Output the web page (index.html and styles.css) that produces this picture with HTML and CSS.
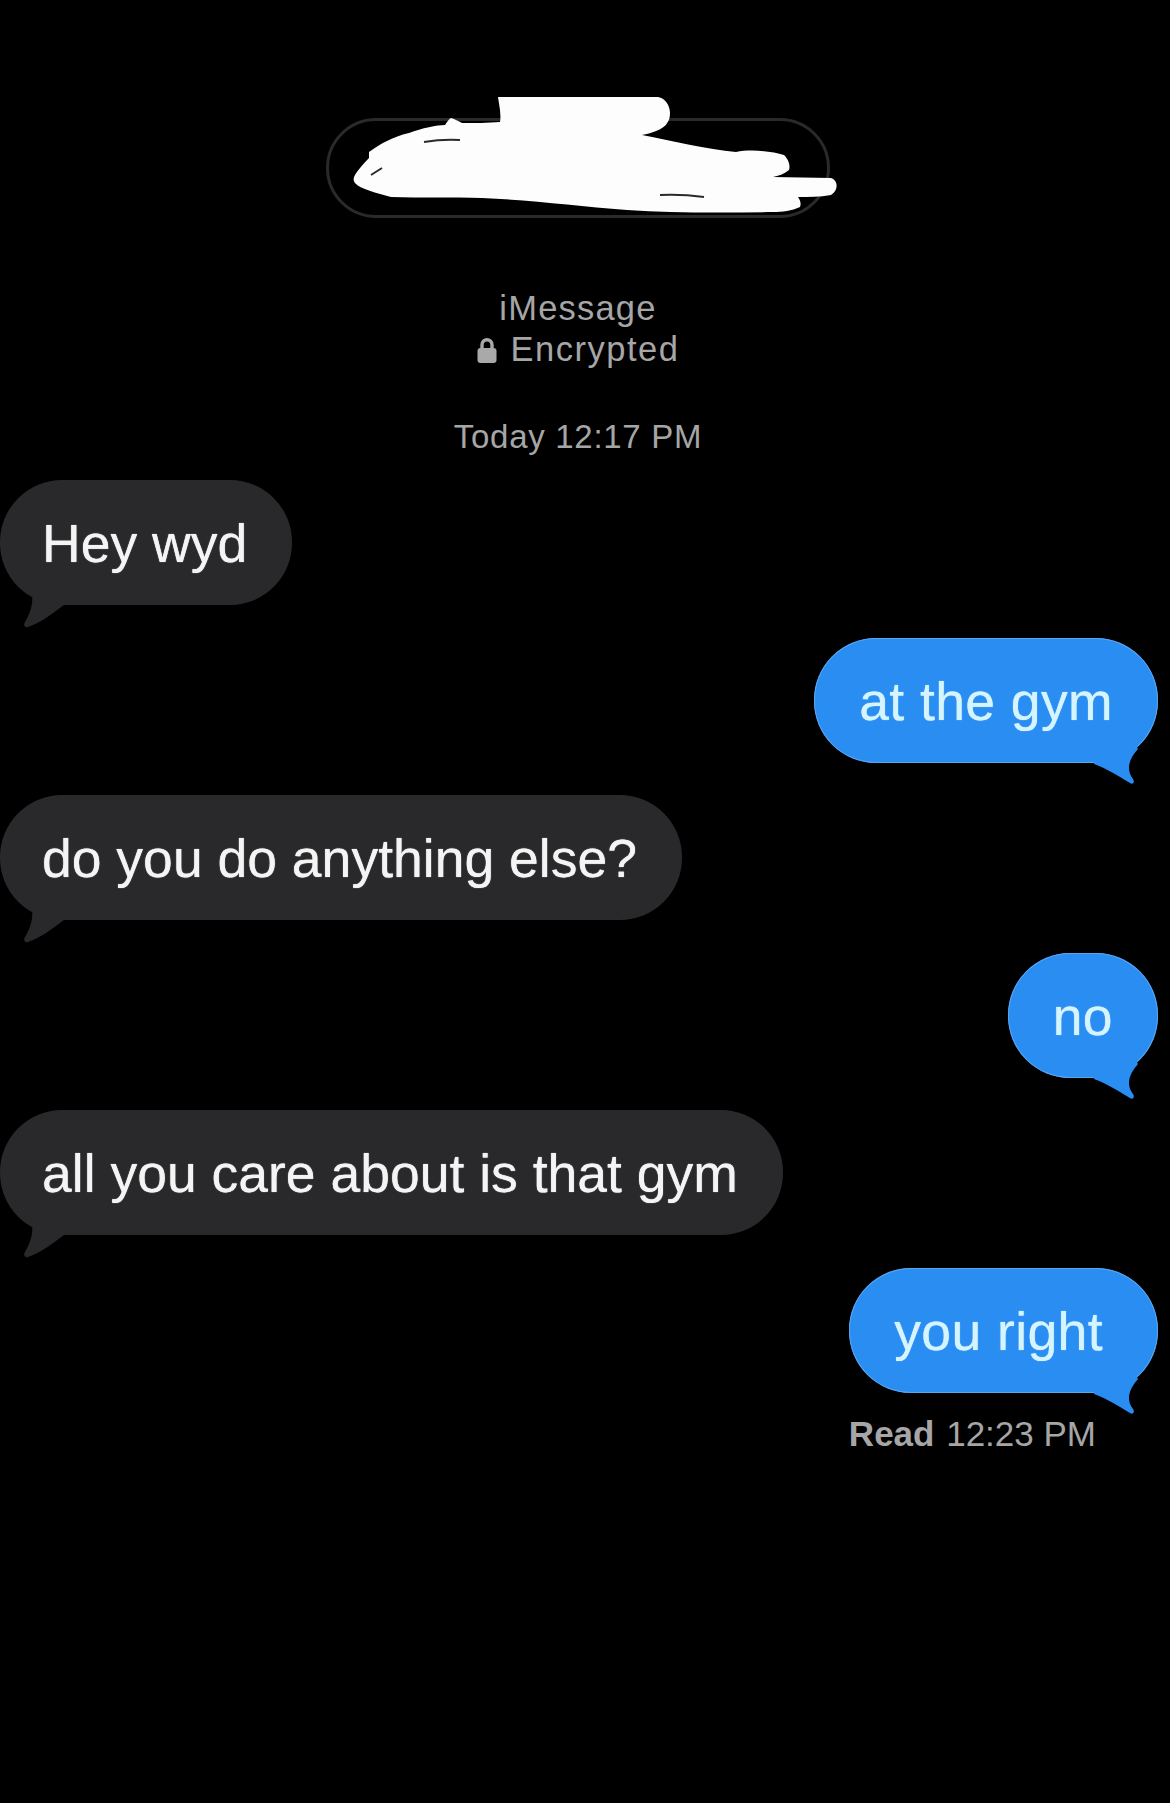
FILE: index.html

```html
<!DOCTYPE html>
<html lang="en">
<head>
  <meta charset="UTF-8" />
  <meta name="viewport" content="width=device-width, initial-scale=1.0"/>
  <title>Messages</title>
  <link rel="stylesheet" href="styles.css">
</head>
<body>
  <header class="head">
    <div class="contact">
      <!-- scribbled out name -->
      <svg class="scribble" width="490" height="120" viewBox="0 0 490 120">
        <path fill="#fdfdfd" d="M146 2 L306 2 C316 4 318 14 318 18 C318 30 310 36 290 40 C320 46 355 54 384 57 C398 54 420 56 432 60 C438 66 438 72 437 75 C432 79 426 81 421 82 L479 83 C486 85 487 95 479 100 C468 102 456 102 446 102 C449 106 449 110 448 112 C440 116 430 117 421 117 C370 118 320 118 275 115 C225 111 180 105 130 103 C100 102 70 103 39 102 C25 98 8 94 3 88 C0 84 1 80 17 63 L17 57 C30 48 40 42 57 38 C70 33 85 30 93 30 C95 27 97 24 99 23 C103 24 106 26 110 28 C122 28 136 28 148 27 C149 22 148 18 148 15 Z"/>
        <path fill="none" stroke="#2a2a2a" stroke-width="2" d="M72 47 Q90 44 108 45 M19 80 L30 73 M308 100 Q330 99 352 102"/>
      </svg>
    </div>
    <p class="meta service">iMessage</p>
    <p class="meta service lock-row">
      <svg class="lock" width="20" height="26" viewBox="0 0 20 26">
        <path fill="none" stroke="#a9a9a9" stroke-width="3.4" d="M5 13 V8 C5 1 15 1 15 8 V13"/>
        <rect x="0.5" y="11" width="19" height="15" rx="3" fill="#a9a9a9"/>
      </svg>
      Encrypted
    </p>
    <p class="meta stamp">Today <span class="time">12:17 PM</span></p>
  </header>

  <main class="thread">
    <div class="bubble in">Hey wyd<svg class="tail" width="44" height="36" viewBox="0 0 44 36"><path d="M10 0 C11 10 10 18 3 30 C1 33 3 36 6 35 C20 30 30 22 42 13 L42 0 Z"/></svg></div>
    <div class="bubble out">at the gym<svg class="tail" width="60" height="60" viewBox="0 0 60 60"><path d="M0 39 C14 44 26 52 36 58 C39 60 41 57 39 54 C33 46 33 36 44 24 L30 0 L0 0 Z"/></svg></div>
    <div class="bubble in">do you do anything else?<svg class="tail" width="44" height="36" viewBox="0 0 44 36"><path d="M10 0 C11 10 10 18 3 30 C1 33 3 36 6 35 C20 30 30 22 42 13 L42 0 Z"/></svg></div>
    <div class="bubble out">no<svg class="tail" width="60" height="60" viewBox="0 0 60 60"><path d="M0 39 C14 44 26 52 36 58 C39 60 41 57 39 54 C33 46 33 36 44 24 L30 0 L0 0 Z"/></svg></div>
    <div class="bubble in">all you care about is that gym<svg class="tail" width="44" height="36" viewBox="0 0 44 36"><path d="M10 0 C11 10 10 18 3 30 C1 33 3 36 6 35 C20 30 30 22 42 13 L42 0 Z"/></svg></div>
    <div class="bubble out last">you right<svg class="tail" width="60" height="60" viewBox="0 0 60 60"><path d="M0 39 C14 44 26 52 36 58 C39 60 41 57 39 54 C33 46 33 36 44 24 L30 0 L0 0 Z"/></svg></div>
    <p class="receipt"><b>Read</b> <span class="time">12:23 PM</span></p>
  </main>
</body>
</html>
```

FILE: styles.css

```css
body {
  margin: 0;
  min-height: 1803px;
  background: #000;
  font-family: "Liberation Sans", Arial, sans-serif;
  overflow: hidden;
}
p {
  margin: 0;
}
.head {
  display: flex;
  flex-direction: column;
  align-items: center;
  padding: 118px 14px 0 0;
}
.contact {
  position: relative;
  width: 504px;
  height: 100px;
  box-sizing: border-box;
  border: 3px solid #2a2a2a;
  border-radius: 50px;
  margin-bottom: 70px;
}
.scribble {
  position: absolute;
  left: 23px;
  top: -26px;
  overflow: visible;
}
.meta {
  color: #a6a6a6;
  font-size: 33px;
  line-height: 41px;
}
.service {
  font-size: 34.5px;
  letter-spacing: 1.2px;
}
.lock-row {
  display: flex;
  align-items: center;
  gap: 14px;
  letter-spacing: 1.5px;
}
.stamp {
  margin-top: 46px;
  letter-spacing: 0.7px;
}
.thread {
  display: flex;
  flex-direction: column;
  gap: 32.5px;
  margin-top: 23px;
  padding-right: 12px;
}
.bubble {
  position: relative;
  height: 125px;
  line-height: 128px;
  font-size: 53.5px;
  border-radius: 62px;
  white-space: nowrap;
  text-shadow: 0 0 1px currentColor;
}
.bubble .tail {
  position: absolute;
}
.in {
  align-self: flex-start;
  padding: 0 45px 0 42px;
  background: #29292b;
  color: #f4f4f4;
}
.in .tail {
  left: 22px;
  bottom: -23px;
  fill: #29292b;
}
.out {
  align-self: flex-end;
  padding: 0 45px;
  background: #2a8df2;
  color: #d4f4ff;
  letter-spacing: 0.4px;
  box-shadow: inset 0 0 0 1px #5aa6ee;
}
.out.last {
  padding-right: 55px;
}
.out .tail {
  right: 4px;
  bottom: -22px;
  fill: #2a8df2;
}
.receipt {
  align-self: flex-end;
  margin: -11px 62px 0 0;
  color: #a6a6a6;
  font-size: 35px;
  line-height: 40px;
}
.receipt b {
  margin-right: 2px;
}
```
